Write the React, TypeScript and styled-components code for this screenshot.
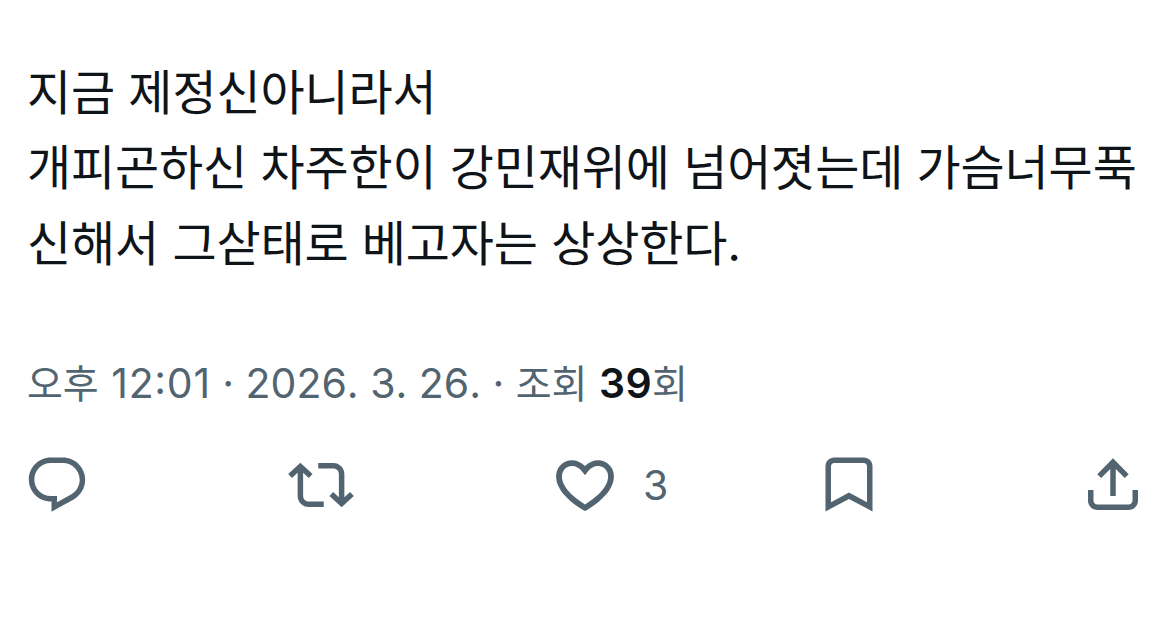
import { ReactNode } from "react";
import styled, { createGlobalStyle } from "styled-components";

const GlobalStyle = createGlobalStyle`
  body {
    margin: 0;
    background: #fff;
    overflow: hidden;
  }
`;

const Post = styled.article`
  box-sizing: border-box;
  width: 1169px;
  height: 621px;
  padding: 55px 22px 0 27px;
  background: #fff;
  color: #0f1419;
  font-family: Inter, "Noto Sans CJK KR", sans-serif;
`;

const Body = styled.p`
  margin: 0;
  font-size: 48px;
  line-height: 75.4px;
  letter-spacing: -0.15px;
  white-space: nowrap;
`;

const Meta = styled.div`
  margin-top: 72px;
  height: 60px;
  font-size: 41px;
  line-height: 60px;
  font-kerning: none;
  letter-spacing: -0.02px;
  color: #536471;
  white-space: nowrap;
`;

const Korean = styled.span`
  font-size: 39px;
`;

const Time = styled.time`
  margin-left: 1px;
  letter-spacing: 0.7px;
  font-feature-settings: "case" 1;
`;

const Views = styled.strong`
  font-weight: 600;
  letter-spacing: 0.3px;
  color: #0f1419;
`;

const Actions = styled.div`
  display: flex;
  justify-content: space-between;
  margin: 39px 1px 0 -3px;
  color: #536471;
`;

const Action = styled.button<{ $width?: number }>`
  display: flex;
  align-items: center;
  gap: 25px;
  width: ${({ $width }) => $width ?? 66}px;
  height: 66px;
  padding: 0;
  border: 0;
  background: none;
  color: inherit;
  font-family: inherit;
`;

const Icon = styled.svg`
  flex: none;
  width: 66px;
  height: 66px;
  fill: currentColor;
`;

const Count = styled.span`
  font-size: 41px;
  line-height: 66px;
`;

const ActionIcon = ({ children }: { children: ReactNode }) => (
  <Icon viewBox="0 0 24 24" aria-hidden="true">{children}</Icon>
);

const App = () => {
  return (
    <>
      <GlobalStyle />
      <Post>
        <Body>
          지금 제정신아니라서<br />
          개피곤하신 차주한이 강민재위에 넘어졋는데 가슴너무푹<br />
          신해서 그삳태로 베고자는 상상한다.
        </Body>

        <Meta>
          <Korean>오후</Korean> <Time>12:01</Time> · 2026. 3. 26. · <Korean>조회</Korean>{' '}
          <Views>39</Views><Korean>회</Korean>
        </Meta>

        <Actions>
          <Action $width={264} aria-label="답글">
            <ActionIcon>
              <path d="M1.751 10c0-4.42 3.584-8 8.005-8h4.366c4.49 0 8.129 3.64 8.129 8.13 0 2.96-1.607 5.68-4.196 7.11l-8.054 4.46v-3.69h-.067c-4.49.1-8.183-3.51-8.183-8.01zm8.005-6c-3.317 0-6.005 2.69-6.005 6 0 3.37 2.77 6.08 6.138 6.01l.351-.01h1.761v2.3l5.087-2.81c1.951-1.08 3.163-3.13 3.163-5.36 0-3.39-2.744-6.13-6.129-6.13H9.756z" />
            </ActionIcon>
          </Action>
          <Action $width={264} aria-label="재게시">
            <ActionIcon>
              <path d="M4.5 3.88l4.432 4.14-1.364 1.46L5.5 7.55V16c0 1.1.896 2 2 2H13v2H7.5c-2.209 0-4-1.79-4-4V7.55L1.432 9.48.068 8.02 4.5 3.88zM16.5 6H11V4h5.5c2.209 0 4 1.79 4 4v8.45l2.068-1.93 1.364 1.46-4.432 4.14-4.432-4.14 1.364-1.46 2.068 1.93V8c0-1.1-.896-2-2-2z" />
            </ActionIcon>
          </Action>
          <Action $width={264} aria-label="마음에 들어요">
            <ActionIcon>
              <path
                transform="translate(-0.6 -0.72) scale(1.05)"
                d="M16.697 5.5c-1.222-.06-2.679.51-3.89 2.16l-.805 1.09-.806-1.09C9.984 6.01 8.526 5.44 7.304 5.5c-1.243.07-2.349.78-2.91 1.91-.552 1.12-.633 2.78.479 4.82 1.074 1.97 3.257 4.27 7.129 6.61 3.87-2.34 6.052-4.64 7.126-6.61 1.111-2.04 1.03-3.7.477-4.82-.561-1.13-1.666-1.84-2.908-1.91zm4.187 7.69c-1.351 2.48-4.001 5.12-8.379 7.67l-.503.3-.504-.3c-4.379-2.55-7.029-5.19-8.382-7.67-1.36-2.5-1.41-4.86-.514-6.67.887-1.79 2.647-2.91 4.601-3.01 1.651-.09 3.368.56 4.798 2.01 1.429-1.45 3.146-2.1 4.796-2.01 1.954.1 3.714 1.22 4.601 3.01.896 1.81.846 4.17-.514 6.67z"
              />
            </ActionIcon>
            <Count>3</Count>
          </Action>
          <Action $width={264} aria-label="북마크">
            <ActionIcon>
              <path d="M3.45 5.2C3.45 3.4 4.85 2 6.65 2h10.7c1.8 0 3.2 1.4 3.2 3.2v16.4L12 17.1l-8.55 4.5V5.2zM6.65 4c-.7 0-1.2.5-1.2 1.2v13.1L12 14.75l6.55 3.55V5.2c0-.7-.5-1.2-1.2-1.2H6.65z" />
            </ActionIcon>
          </Action>
          <Action aria-label="공유">
            <ActionIcon>
              <path d="M12 2.3l5.7 5.75-1.41 1.42L13 6.15V16h-2V6.15L7.7 9.47 6.29 8.05 12 2.3zM21.1 13.85v3.75c0 1.95-1.5 3.45-3.45 3.45H6.35c-1.95 0-3.45-1.5-3.45-3.45v-3.75h2v3.75c0 .85.6 1.45 1.45 1.45h11.3c.85 0 1.45-.6 1.45-1.45v-3.75h2z" />
            </ActionIcon>
          </Action>
        </Actions>
      </Post>
    </>
  );
};

export default App;
